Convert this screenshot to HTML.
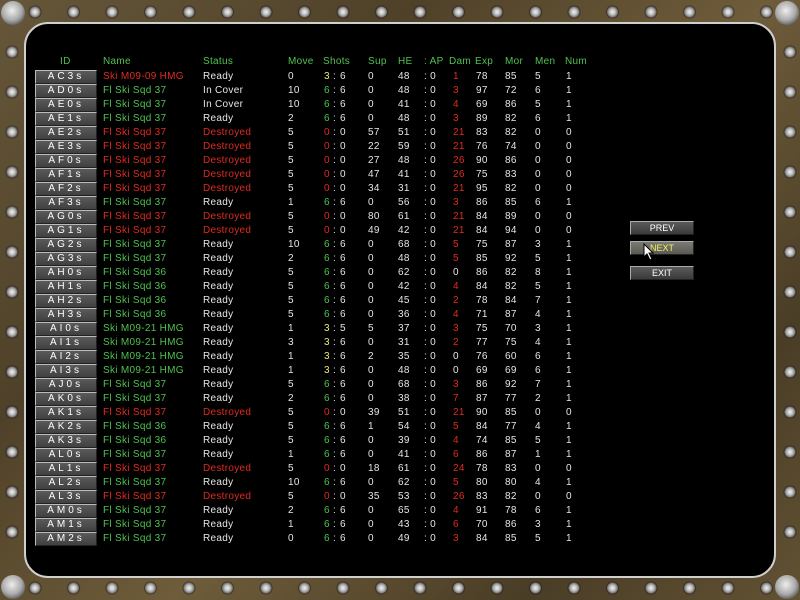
<!DOCTYPE html>
<html><head><meta charset="utf-8"><style>
body{margin:0;width:800px;height:600px;overflow:hidden;background:#000}
#f{position:absolute;left:0;top:0;width:800px;height:600px;background:linear-gradient(135deg,#66573a,#4f4129 30%,#6e5c3a 55%,#4a3d26 80%,#625234);}
.rv{position:absolute;background-image:radial-gradient(circle at 8px 8px,#f2f2f2 0,#bbb 3px,#777 5px,rgba(0,0,0,.4) 6px,transparent 7px)}
.big{position:absolute;width:24px;height:24px;border-radius:50%;background:radial-gradient(circle at 45% 40%,#eee,#aaa 50%,#555 80%)}
#p{position:absolute;left:24px;top:22px;width:748px;height:552px;background:#000;border:2px solid #cfcfcf;border-radius:24px}
.t{position:absolute;left:0;top:0;width:800px;height:600px;font-family:"Liberation Sans",sans-serif;font-size:10px;color:#e6e6e6;letter-spacing:0.3px}
.r{position:absolute;left:0;height:13px;line-height:13px;width:800px}
.r span{position:absolute;white-space:pre}
.b{left:35px;width:60px;height:12px;top:0;background:linear-gradient(#5a5a5a,#404040);border-top:1px solid #bbb;border-left:1px solid #bbb;border-right:1px solid #222;border-bottom:1px solid #222;text-align:center;letter-spacing:3px;font-size:10px;line-height:12px;color:#fff}
.n{left:103px}.s{left:203px}.m{left:288px}.a{left:324px}.c{left:333px}.d{left:340px}.u{left:368px}.h{left:398px}.p{left:424px}.g{left:453px}.e{left:476px}.o{left:505px}.w{left:535px}.x{left:566px}
.G{color:#4fc24f}.R{color:#e02a22}.Y{color:#ecec70}
.hd span{color:#4fc24f}
.btn{position:absolute;left:630px;width:62px;height:12px;background:linear-gradient(#5a5a5a,#3a3a3a);border-top:1px solid #aaa;border-left:1px solid #aaa;border-right:1px solid #222;border-bottom:1px solid #222;color:#fff;font-family:"Liberation Sans",sans-serif;font-size:9px;text-align:center;line-height:12px}
</style></head><body>
<div id="f"></div>
<div class="rv" style="left:27px;top:4px;width:760px;height:16px;background-size:38.5px 16px;background-repeat:repeat-x"></div>
<div class="rv" style="left:27px;top:580px;width:760px;height:16px;background-size:38.5px 16px;background-repeat:repeat-x"></div>
<div class="rv" style="left:4px;top:44px;width:16px;height:520px;background-size:16px 40px;background-repeat:repeat-y"></div>
<div class="rv" style="left:782px;top:44px;width:16px;height:520px;background-size:16px 40px;background-repeat:repeat-y"></div>
<div class="big" style="left:1px;top:1px"></div><div class="big" style="left:775px;top:1px"></div>
<div class="big" style="left:1px;top:575px"></div><div class="big" style="left:775px;top:575px"></div>
<div id="p"></div>
<div class="t">
<div class="r hd" style="top:55px"><span style="left:60px">ID</span><span class="n">Name</span><span class="s">Status</span><span class="m">Move</span><span style="left:323px">Shots</span><span class="u">Sup</span><span class="h">HE</span><span class="p">: AP</span><span style="left:449px">Dam</span><span style="left:475px">Exp</span><span class="o">Mor</span><span class="w">Men</span><span style="left:565px">Num</span></div>

<div class="r" style="top:70px"><span class="b">AC3s</span><span class="n R">Ski M09-09 HMG</span><span class="s">Ready</span><span class="m">0</span><span class="a Y">3</span><span class="c">:</span><span class="d">6</span><span class="u">0</span><span class="h">48</span><span class="p">: 0</span><span class="g R">1</span><span class="e">78</span><span class="o">85</span><span class="w">5</span><span class="x">1</span></div>
<div class="r" style="top:84px"><span class="b">AD0s</span><span class="n G">Fl Ski Sqd 37</span><span class="s">In Cover</span><span class="m">10</span><span class="a G">6</span><span class="c">:</span><span class="d">6</span><span class="u">0</span><span class="h">48</span><span class="p">: 0</span><span class="g R">3</span><span class="e">97</span><span class="o">72</span><span class="w">6</span><span class="x">1</span></div>
<div class="r" style="top:98px"><span class="b">AE0s</span><span class="n G">Fl Ski Sqd 37</span><span class="s">In Cover</span><span class="m">10</span><span class="a G">6</span><span class="c">:</span><span class="d">6</span><span class="u">0</span><span class="h">41</span><span class="p">: 0</span><span class="g R">4</span><span class="e">69</span><span class="o">86</span><span class="w">5</span><span class="x">1</span></div>
<div class="r" style="top:112px"><span class="b">AE1s</span><span class="n G">Fl Ski Sqd 37</span><span class="s">Ready</span><span class="m">2</span><span class="a G">6</span><span class="c">:</span><span class="d">6</span><span class="u">0</span><span class="h">48</span><span class="p">: 0</span><span class="g R">3</span><span class="e">89</span><span class="o">82</span><span class="w">6</span><span class="x">1</span></div>
<div class="r" style="top:126px"><span class="b">AE2s</span><span class="n R">Fl Ski Sqd 37</span><span class="s R">Destroyed</span><span class="m">5</span><span class="a R">0</span><span class="c">:</span><span class="d">0</span><span class="u">57</span><span class="h">51</span><span class="p">: 0</span><span class="g R">21</span><span class="e">83</span><span class="o">82</span><span class="w">0</span><span class="x">0</span></div>
<div class="r" style="top:140px"><span class="b">AE3s</span><span class="n R">Fl Ski Sqd 37</span><span class="s R">Destroyed</span><span class="m">5</span><span class="a R">0</span><span class="c">:</span><span class="d">0</span><span class="u">22</span><span class="h">59</span><span class="p">: 0</span><span class="g R">21</span><span class="e">76</span><span class="o">74</span><span class="w">0</span><span class="x">0</span></div>
<div class="r" style="top:154px"><span class="b">AF0s</span><span class="n R">Fl Ski Sqd 37</span><span class="s R">Destroyed</span><span class="m">5</span><span class="a R">0</span><span class="c">:</span><span class="d">0</span><span class="u">27</span><span class="h">48</span><span class="p">: 0</span><span class="g R">26</span><span class="e">90</span><span class="o">86</span><span class="w">0</span><span class="x">0</span></div>
<div class="r" style="top:168px"><span class="b">AF1s</span><span class="n R">Fl Ski Sqd 37</span><span class="s R">Destroyed</span><span class="m">5</span><span class="a R">0</span><span class="c">:</span><span class="d">0</span><span class="u">47</span><span class="h">41</span><span class="p">: 0</span><span class="g R">26</span><span class="e">75</span><span class="o">83</span><span class="w">0</span><span class="x">0</span></div>
<div class="r" style="top:182px"><span class="b">AF2s</span><span class="n R">Fl Ski Sqd 37</span><span class="s R">Destroyed</span><span class="m">5</span><span class="a R">0</span><span class="c">:</span><span class="d">0</span><span class="u">34</span><span class="h">31</span><span class="p">: 0</span><span class="g R">21</span><span class="e">95</span><span class="o">82</span><span class="w">0</span><span class="x">0</span></div>
<div class="r" style="top:196px"><span class="b">AF3s</span><span class="n G">Fl Ski Sqd 37</span><span class="s">Ready</span><span class="m">1</span><span class="a G">6</span><span class="c">:</span><span class="d">6</span><span class="u">0</span><span class="h">56</span><span class="p">: 0</span><span class="g R">3</span><span class="e">86</span><span class="o">85</span><span class="w">6</span><span class="x">1</span></div>
<div class="r" style="top:210px"><span class="b">AG0s</span><span class="n R">Fl Ski Sqd 37</span><span class="s R">Destroyed</span><span class="m">5</span><span class="a R">0</span><span class="c">:</span><span class="d">0</span><span class="u">80</span><span class="h">61</span><span class="p">: 0</span><span class="g R">21</span><span class="e">84</span><span class="o">89</span><span class="w">0</span><span class="x">0</span></div>
<div class="r" style="top:224px"><span class="b">AG1s</span><span class="n R">Fl Ski Sqd 37</span><span class="s R">Destroyed</span><span class="m">5</span><span class="a R">0</span><span class="c">:</span><span class="d">0</span><span class="u">49</span><span class="h">42</span><span class="p">: 0</span><span class="g R">21</span><span class="e">84</span><span class="o">94</span><span class="w">0</span><span class="x">0</span></div>
<div class="r" style="top:238px"><span class="b">AG2s</span><span class="n G">Fl Ski Sqd 37</span><span class="s">Ready</span><span class="m">10</span><span class="a G">6</span><span class="c">:</span><span class="d">6</span><span class="u">0</span><span class="h">68</span><span class="p">: 0</span><span class="g R">5</span><span class="e">75</span><span class="o">87</span><span class="w">3</span><span class="x">1</span></div>
<div class="r" style="top:252px"><span class="b">AG3s</span><span class="n G">Fl Ski Sqd 37</span><span class="s">Ready</span><span class="m">2</span><span class="a G">6</span><span class="c">:</span><span class="d">6</span><span class="u">0</span><span class="h">48</span><span class="p">: 0</span><span class="g R">5</span><span class="e">85</span><span class="o">92</span><span class="w">5</span><span class="x">1</span></div>
<div class="r" style="top:266px"><span class="b">AH0s</span><span class="n G">Fl Ski Sqd 36</span><span class="s">Ready</span><span class="m">5</span><span class="a G">6</span><span class="c">:</span><span class="d">6</span><span class="u">0</span><span class="h">62</span><span class="p">: 0</span><span class="g">0</span><span class="e">86</span><span class="o">82</span><span class="w">8</span><span class="x">1</span></div>
<div class="r" style="top:280px"><span class="b">AH1s</span><span class="n G">Fl Ski Sqd 36</span><span class="s">Ready</span><span class="m">5</span><span class="a G">6</span><span class="c">:</span><span class="d">6</span><span class="u">0</span><span class="h">42</span><span class="p">: 0</span><span class="g R">4</span><span class="e">84</span><span class="o">82</span><span class="w">5</span><span class="x">1</span></div>
<div class="r" style="top:294px"><span class="b">AH2s</span><span class="n G">Fl Ski Sqd 36</span><span class="s">Ready</span><span class="m">5</span><span class="a G">6</span><span class="c">:</span><span class="d">6</span><span class="u">0</span><span class="h">45</span><span class="p">: 0</span><span class="g R">2</span><span class="e">78</span><span class="o">84</span><span class="w">7</span><span class="x">1</span></div>
<div class="r" style="top:308px"><span class="b">AH3s</span><span class="n G">Fl Ski Sqd 36</span><span class="s">Ready</span><span class="m">5</span><span class="a G">6</span><span class="c">:</span><span class="d">6</span><span class="u">0</span><span class="h">36</span><span class="p">: 0</span><span class="g R">4</span><span class="e">71</span><span class="o">87</span><span class="w">4</span><span class="x">1</span></div>
<div class="r" style="top:322px"><span class="b">AI0s</span><span class="n G">Ski M09-21 HMG</span><span class="s">Ready</span><span class="m">1</span><span class="a Y">3</span><span class="c">:</span><span class="d">5</span><span class="u">5</span><span class="h">37</span><span class="p">: 0</span><span class="g R">3</span><span class="e">75</span><span class="o">70</span><span class="w">3</span><span class="x">1</span></div>
<div class="r" style="top:336px"><span class="b">AI1s</span><span class="n G">Ski M09-21 HMG</span><span class="s">Ready</span><span class="m">3</span><span class="a Y">3</span><span class="c">:</span><span class="d">6</span><span class="u">0</span><span class="h">31</span><span class="p">: 0</span><span class="g R">2</span><span class="e">77</span><span class="o">75</span><span class="w">4</span><span class="x">1</span></div>
<div class="r" style="top:350px"><span class="b">AI2s</span><span class="n G">Ski M09-21 HMG</span><span class="s">Ready</span><span class="m">1</span><span class="a Y">3</span><span class="c">:</span><span class="d">6</span><span class="u">2</span><span class="h">35</span><span class="p">: 0</span><span class="g">0</span><span class="e">76</span><span class="o">60</span><span class="w">6</span><span class="x">1</span></div>
<div class="r" style="top:364px"><span class="b">AI3s</span><span class="n G">Ski M09-21 HMG</span><span class="s">Ready</span><span class="m">1</span><span class="a Y">3</span><span class="c">:</span><span class="d">6</span><span class="u">0</span><span class="h">48</span><span class="p">: 0</span><span class="g">0</span><span class="e">69</span><span class="o">69</span><span class="w">6</span><span class="x">1</span></div>
<div class="r" style="top:378px"><span class="b">AJ0s</span><span class="n G">Fl Ski Sqd 37</span><span class="s">Ready</span><span class="m">5</span><span class="a G">6</span><span class="c">:</span><span class="d">6</span><span class="u">0</span><span class="h">68</span><span class="p">: 0</span><span class="g R">3</span><span class="e">86</span><span class="o">92</span><span class="w">7</span><span class="x">1</span></div>
<div class="r" style="top:392px"><span class="b">AK0s</span><span class="n G">Fl Ski Sqd 37</span><span class="s">Ready</span><span class="m">2</span><span class="a G">6</span><span class="c">:</span><span class="d">6</span><span class="u">0</span><span class="h">38</span><span class="p">: 0</span><span class="g R">7</span><span class="e">87</span><span class="o">77</span><span class="w">2</span><span class="x">1</span></div>
<div class="r" style="top:406px"><span class="b">AK1s</span><span class="n R">Fl Ski Sqd 37</span><span class="s R">Destroyed</span><span class="m">5</span><span class="a R">0</span><span class="c">:</span><span class="d">0</span><span class="u">39</span><span class="h">51</span><span class="p">: 0</span><span class="g R">21</span><span class="e">90</span><span class="o">85</span><span class="w">0</span><span class="x">0</span></div>
<div class="r" style="top:420px"><span class="b">AK2s</span><span class="n G">Fl Ski Sqd 36</span><span class="s">Ready</span><span class="m">5</span><span class="a G">6</span><span class="c">:</span><span class="d">6</span><span class="u">1</span><span class="h">54</span><span class="p">: 0</span><span class="g R">5</span><span class="e">84</span><span class="o">77</span><span class="w">4</span><span class="x">1</span></div>
<div class="r" style="top:434px"><span class="b">AK3s</span><span class="n G">Fl Ski Sqd 36</span><span class="s">Ready</span><span class="m">5</span><span class="a G">6</span><span class="c">:</span><span class="d">6</span><span class="u">0</span><span class="h">39</span><span class="p">: 0</span><span class="g R">4</span><span class="e">74</span><span class="o">85</span><span class="w">5</span><span class="x">1</span></div>
<div class="r" style="top:448px"><span class="b">AL0s</span><span class="n G">Fl Ski Sqd 37</span><span class="s">Ready</span><span class="m">1</span><span class="a G">6</span><span class="c">:</span><span class="d">6</span><span class="u">0</span><span class="h">41</span><span class="p">: 0</span><span class="g R">6</span><span class="e">86</span><span class="o">87</span><span class="w">1</span><span class="x">1</span></div>
<div class="r" style="top:462px"><span class="b">AL1s</span><span class="n R">Fl Ski Sqd 37</span><span class="s R">Destroyed</span><span class="m">5</span><span class="a R">0</span><span class="c">:</span><span class="d">0</span><span class="u">18</span><span class="h">61</span><span class="p">: 0</span><span class="g R">24</span><span class="e">78</span><span class="o">83</span><span class="w">0</span><span class="x">0</span></div>
<div class="r" style="top:476px"><span class="b">AL2s</span><span class="n G">Fl Ski Sqd 37</span><span class="s">Ready</span><span class="m">10</span><span class="a G">6</span><span class="c">:</span><span class="d">6</span><span class="u">0</span><span class="h">62</span><span class="p">: 0</span><span class="g R">5</span><span class="e">80</span><span class="o">80</span><span class="w">4</span><span class="x">1</span></div>
<div class="r" style="top:490px"><span class="b">AL3s</span><span class="n R">Fl Ski Sqd 37</span><span class="s R">Destroyed</span><span class="m">5</span><span class="a R">0</span><span class="c">:</span><span class="d">0</span><span class="u">35</span><span class="h">53</span><span class="p">: 0</span><span class="g R">26</span><span class="e">83</span><span class="o">82</span><span class="w">0</span><span class="x">0</span></div>
<div class="r" style="top:504px"><span class="b">AM0s</span><span class="n G">Fl Ski Sqd 37</span><span class="s">Ready</span><span class="m">2</span><span class="a G">6</span><span class="c">:</span><span class="d">6</span><span class="u">0</span><span class="h">65</span><span class="p">: 0</span><span class="g R">4</span><span class="e">91</span><span class="o">78</span><span class="w">6</span><span class="x">1</span></div>
<div class="r" style="top:518px"><span class="b">AM1s</span><span class="n G">Fl Ski Sqd 37</span><span class="s">Ready</span><span class="m">1</span><span class="a G">6</span><span class="c">:</span><span class="d">6</span><span class="u">0</span><span class="h">43</span><span class="p">: 0</span><span class="g R">6</span><span class="e">70</span><span class="o">86</span><span class="w">3</span><span class="x">1</span></div>
<div class="r" style="top:532px"><span class="b">AM2s</span><span class="n G">Fl Ski Sqd 37</span><span class="s">Ready</span><span class="m">0</span><span class="a G">6</span><span class="c">:</span><span class="d">6</span><span class="u">0</span><span class="h">49</span><span class="p">: 0</span><span class="g R">3</span><span class="e">84</span><span class="o">85</span><span class="w">5</span><span class="x">1</span></div>
</div>
<div class="btn" style="top:221px">PREV</div>
<div class="btn" style="top:241px;background:linear-gradient(#7a7a72,#5a5a52);color:#f0f060">NEXT</div>
<div class="btn" style="top:266px">EXIT</div>
<svg style="position:absolute;left:643px;top:243px" width="12" height="18" viewBox="0 0 12 18"><path d="M1 1 L1 14 L4 11 L7 17 L9 16 L6 10 L10 10 Z" fill="#fff" stroke="#000" stroke-width="1"/></svg>
</body></html>
